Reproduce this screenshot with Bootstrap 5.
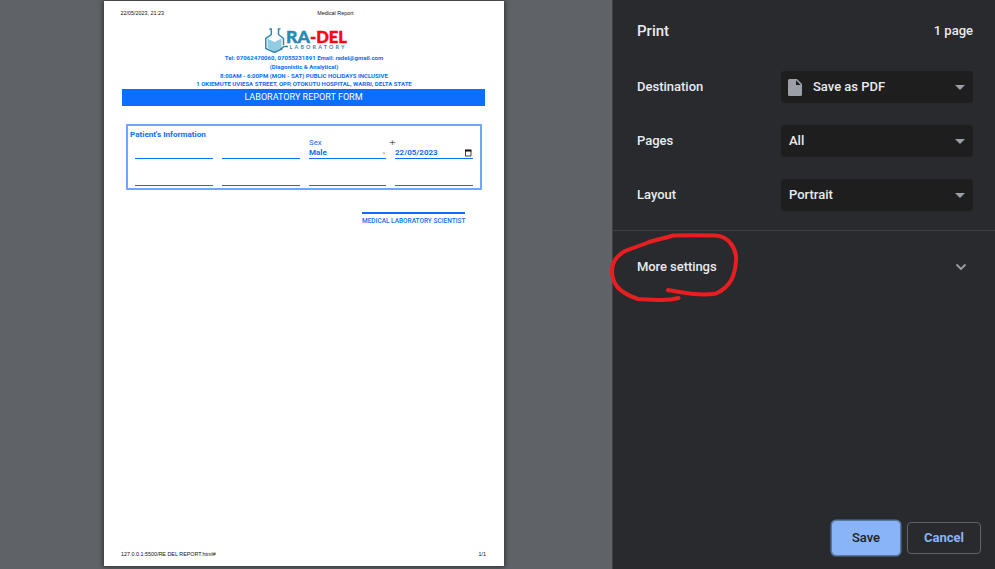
<!DOCTYPE html>
<html lang="en">
<head>
<meta charset="utf-8">
<meta name="viewport" content="width=device-width, initial-scale=1">
<title>Print</title>
<link href="https://cdn.jsdelivr.net/npm/bootstrap@5.3.0/dist/css/bootstrap.min.css" rel="stylesheet">
<style>
body{font-family:Roboto,sans-serif;font-size:13px;line-height:20px;background:#5f6368;color:#e8eaed}
.preview{width:612px;background:#5f6368}
.sheet{width:400px;height:565px;margin:1px 0 0 104px;background:#fff;color:#0d6efd;box-shadow:0 0 5px 1px rgba(32,33,36,.75);padding:8px 18px 0;font-weight:700}
.sheet-meta{font:400 5.4px/8px "Liberation Sans",sans-serif;color:#111;white-space:nowrap}
.sheet-meta.top{height:8px;padding:0 132.5px 0 0;margin-left:-1.5px}
.sheet-meta.bottom{margin:auto 0 8px -1px}
.brand{height:27px;margin-top:9px}
.contact{font-size:6.05px;line-height:9px;height:9px;white-space:nowrap;text-align:center}
.contact.address{height:9px;line-height:8px}
.form-title{background:#0d6efd;color:#fff;font-size:9.05px;font-weight:400;line-height:17px;height:17px;margin-right:1px}
.patient{height:66px;width:356px;margin:18px 0 0 4px;border:2px solid #6ea8fe;padding:4px 7px 0}
.patient-title{font-size:8.1px;line-height:9px;margin:0 0 0 -5px}
.fields{display:grid;grid-template-columns:78px 78px 77px 78px;column-gap:9px}
.field-line{height:27px;border-bottom:1px solid #0d6efd}
.field-line.first{height:20px;line-height:10px;font-size:8px}
.field-label{font-size:7.8px;font-weight:400;line-height:8px;height:9px}
.field-value{height:10px}
.help-mark{margin-left:-6px}
.signature{width:103px;margin:22px 0 0 240px;border-top:2px solid #0d6efd;font-size:6.5px;line-height:8px;padding-top:3px;white-space:nowrap;font-weight:500}
.panel{width:383px;background:#292a2d;border-left:1px solid #3c4043;font-weight:500}
.panel-head{height:60px;padding:2px 22px 0 24px}
.panel-title{font-size:15px;font-weight:500}
.setting{height:54px;padding:0 22px 0 24px}
.picker{width:192px;height:32px;background:#1e1e1f;border-radius:4px;padding:0 8px}
.picker svg{margin:0 11px 0 -1px}
.caret{width:0;height:0;border:5px solid transparent;border-top-color:#9aa0a6;border-bottom:0}
.more{height:72px;margin-top:8px;border-top:1px solid #3f4042;padding:0 28px 0 24px}
.more span{letter-spacing:-.06px}
.actions{padding:0 14px 14px;gap:7px}
.btn-print{width:68px;height:34px;border:1px solid #8ab4f8;background:#8ab4f8;color:#202124;border-radius:4px;font-size:13px;font-weight:500;padding:0;box-shadow:0 0 0 1.5px #58769f}
.btn-stop{width:74px;height:32px;border:1px solid #5f6368;color:#8ab4f8;border-radius:4px;font-size:13px;font-weight:700;padding:0}
.annotation{left:600px;top:220px;pointer-events:none}
</style>
<script src="https://cdn.jsdelivr.net/npm/bootstrap@5.3.0/dist/js/bootstrap.bundle.min.js"></script>
</head>
<body class="overflow-hidden">
<div class="d-flex vh-100 position-relative">
  <main class="preview flex-shrink-0 overflow-hidden">
    <article class="sheet d-flex flex-column">
      <div class="sheet-meta top d-flex justify-content-between"><span>22/05/2023, 21:23</span><span>Medical Report</span></div>
      <svg class="brand" width="364" height="27" viewBox="122 26 364 27" aria-label="RA-DEL Laboratory">
        <path d="M267.500 38h14v9.500l-7 4.500-7-4.500z" fill="#93cbe0"/>
        <path d="M267.500 38.500l7 3.500 7-3.500v-1.500h-14z" fill="#fff"/>
        <path d="M269.300 29h2v5.500l-5.500 4v10l8.700 4 8-4M280.500 29h-2v5.500l5 4V45" fill="none" stroke="#2d87b3" stroke-width="1.500"/>
        <path d="M280 49.500l4-3h4" fill="none" stroke="#2d87b3" stroke-width="1.500"/>
        <g font-family="Lato,sans-serif" font-weight="900" font-size="16" stroke-width=".4">
          <text x="286" y="43.200" fill="#2d87b3" stroke="#2d87b3" textLength="24" lengthAdjust="spacingAndGlyphs">RA</text>
          <text x="310" y="43.200" fill="#fc0510" stroke="#fc0510" textLength="37" lengthAdjust="spacingAndGlyphs">-DEL</text>
        </g>
        <text x="289.500" y="48.800" fill="#3b83a5" font-family="Lato,sans-serif" font-weight="700" font-size="5.400" textLength="55">LABORATORY</text>
      </svg>
      <div class="contact">Tel: 07062470060, 07055231891 Email: radel@gmail.com</div>
      <div class="contact">(Diagonistic &amp; Analytical)</div>
      <div class="contact">8:00AM - 6:00PM (MON - SAT) PUBLIC HOLIDAYS INCLUSIVE</div>
      <div class="contact address">1 OKIEMUTE UVIESA STREET, OPP, OTOKUTU HOSPITAL, WARRI, DELTA STATE</div>
      <div class="form-title text-center">LABORATORY REPORT FORM</div>
      <section class="patient">
        <h2 class="patient-title fw-bold">Patient's Information</h2>
        <div class="fields">
          <div class="field-line first"></div>
          <div class="field-line first"></div>
          <div class="field-line first">
            <div class="field-label">Sex</div>
            <div class="field-value d-flex justify-content-between align-items-center"><span>Male</span><svg width="4" height="3"><path d="M0 .5h4L2 2.500z" fill="#b0b5bc"/></svg></div>
          </div>
          <div class="field-line first">
            <div class="field-label"><svg class="help-mark d-block" width="7" height="7" viewBox="0 0 7 7"><path d="M1 1h5v5H1z" fill="#eee"/><path d="M3.500 1v5" stroke="#aaa"/><path d="M.5 3.500h6" stroke="#999"/><path d="M2.500 3.500h2" stroke="#444"/></svg></div>
            <div class="field-value d-flex justify-content-between align-items-center"><span class="ps-0">22/05/2023</span><svg width="9" height="8" viewBox="0 0 9 8"><path d="M1.500 2v5h5.500V2" fill="none" stroke="#444"/><path d="M1 .5h6.500v2H1z" fill="#111"/></svg></div>
          </div>
          <div class="field-line"></div><div class="field-line"></div><div class="field-line"></div><div class="field-line"></div>
        </div>
      </section>
      <div class="signature">MEDICAL LABORATORY SCIENTIST</div>
      <div class="sheet-meta bottom d-flex justify-content-between"><span>127.0.0.1:5500/RE DEL REPORT.html#</span><span>1/1</span></div>
    </article>
  </main>
  <aside class="panel d-flex flex-column flex-shrink-0">
    <header class="panel-head d-flex justify-content-between align-items-center"><span class="panel-title">Print</span><span>1 page</span></header>
    <div class="setting d-flex justify-content-between align-items-center"><span>Destination</span>
      <div class="picker d-flex align-items-center"><svg width="14" height="17" viewBox="0 0 14 17"><path d="M1.500 0H9l5 5v10.500q0 1.500-1.500 1.500h-11Q0 17 0 15.500v-14Q0 0 1.500 0z" fill="#9aa0a6"/><path d="M8 1.300V6h4.700z" fill="#1e1e1f"/></svg><span>Save as PDF</span><i class="caret ms-auto"></i></div></div>
    <div class="setting d-flex justify-content-between align-items-center"><span>Pages</span>
      <div class="picker d-flex align-items-center justify-content-between"><span>All</span><i class="caret"></i></div></div>
    <div class="setting d-flex justify-content-between align-items-center"><span>Layout</span>
      <div class="picker d-flex align-items-center justify-content-between"><span>Portrait</span><i class="caret"></i></div></div>
    <div class="more d-flex justify-content-between align-items-center"><span>More settings</span><svg width="12" height="8" viewBox="0 0 12 8"><path d="M1.500 1.500L6 6l4.500-4.500" fill="none" stroke="#9aa0a6" stroke-width="1.800"/></svg></div>
    <footer class="actions d-flex justify-content-end align-items-center mt-auto"><button class="btn btn-print">Save</button><button class="btn btn-stop">Cancel</button></footer>
  </aside>
  <svg class="annotation position-absolute" width="160" height="90" viewBox="0 0 160 90"><path d="M78.500 78C67 81 55 80 38 79C26 75 15 68 13 58C10 47 13 38 25 31C32 28 40 26 49 22C59 19 66 18 73 15.500C88 15 101 15 115 15.500C129 16 137 29 136 41C135 55 131 67 116 73.500C100 76 85 73 68 70" fill="none" stroke="#e81e20" stroke-width="4" stroke-linecap="round" stroke-linejoin="round"/></svg>
</div>
</body>
</html>
